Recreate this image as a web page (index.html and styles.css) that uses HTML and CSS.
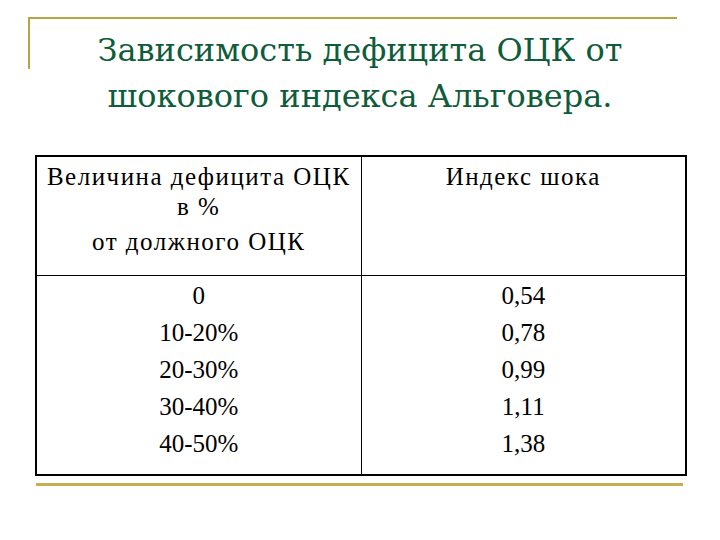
FILE: index.html
```html
<!DOCTYPE html>
<html>
<head>
<meta charset="utf-8">
<link rel="stylesheet" href="styles.css">
</head>
<body>
<div class="slide">
  <header class="header">
    <h1 class="title"><span class="tline">Зависимость дефицита ОЦК от</span><span class="tline">шокового индекса Альговера.</span></h1>
  </header>
  <table class="data">
    <colgroup><col class="c1"><col class="c2"></colgroup>
    <thead>
      <tr>
        <th class="head">
          <div class="stack">
            <span class="hl">Величина дефицита ОЦК</span>
            <span class="hl">в %</span>
            <span class="hl gap">от должного ОЦК</span>
          </div>
        </th>
        <th class="head">
          <div class="stack">
            <span class="hl">Индекс шока</span>
          </div>
        </th>
      </tr>
    </thead>
    <tbody>
      <tr>
        <td class="body">
          <div class="stack">
            <span class="bl">0</span>
            <span class="bl">10-20%</span>
            <span class="bl">20-30%</span>
            <span class="bl">30-40%</span>
            <span class="bl">40-50%</span>
          </div>
        </td>
        <td class="body">
          <div class="stack">
            <span class="bl">0,54</span>
            <span class="bl">0,78</span>
            <span class="bl">0,99</span>
            <span class="bl">1,11</span>
            <span class="bl">1,38</span>
          </div>
        </td>
      </tr>
    </tbody>
  </table>
  <div class="bottom-rule"></div>
</div>
</body>
</html>
```
FILE: styles.css
```css
html, body {
  margin: 0;
  padding: 0;
  background: #ffffff;
}
.slide {
  width: 720px;
  height: 540px;
  padding-top: 17px;
  box-sizing: border-box;
  font-family: "Liberation Serif", serif;
  color: #000;
}
.header {
  position: relative;
  border-top: 2px solid #b8a443;
  margin-left: 28px;
  width: 649px;
}
.header::before {
  content: "";
  position: absolute;
  left: 0;
  top: 0;
  width: 2px;
  height: 50px;
  background: #b8a443;
}
.title {
  margin: 0 0 0 -28px;
  width: 720px;
  padding-top: 8px;
  display: flex;
  flex-direction: column;
  align-items: center;
  font-weight: normal;
  color: #0f5c3b;
}
.tline {
  display: flex;
  align-items: center;
  height: 46px;
  font-family: "DejaVu Serif", serif;
  font-size: 32px;
}
.data {
  margin: 36px 0 0 35px;
  width: 650px;
  border-collapse: collapse;
  border: 2px solid #000;
  table-layout: fixed;
}
.c1 { width: 325px; }
.c2 { width: 325px; }
.data th, .data td {
  border: 1px solid #000;
  padding: 0;
  vertical-align: top;
  font-weight: normal;
}
.stack {
  display: flex;
  flex-direction: column;
  align-items: center;
}
.head {
  height: 119px;
  padding-top: 5px !important;
  box-sizing: border-box;
}
.hl {
  display: flex;
  align-items: center;
  height: 30px;
  font-family: "Liberation Serif", serif;
  font-size: 25px;
  letter-spacing: 1.5px;
}
.hl.gap {
  margin-top: 5px;
}
.body {
  height: 200px;
  padding-top: 2px !important;
  box-sizing: border-box;
}
.bl {
  display: flex;
  align-items: center;
  height: 37px;
  font-family: "Liberation Serif", serif;
  font-size: 25px;
}
.bottom-rule {
  margin: 7px 0 0 36px;
  width: 647px;
  height: 3px;
  background: #c9ad52;
}
```
